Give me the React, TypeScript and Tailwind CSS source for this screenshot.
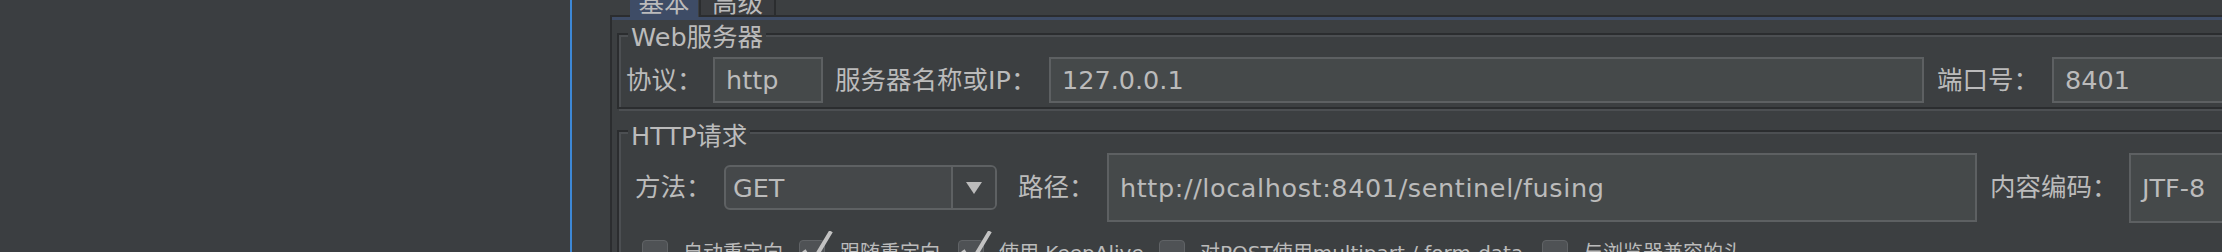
import React from 'react';

const field =
  'shrink-0 border-2 border-[#5d6062] bg-[#45494a] pl-[11px] flex items-center whitespace-nowrap leading-[30px]';

// etched border like Swing's TitledBorder: dark line, light line 2px lower/right
const groupBox =
  'border-2 border-[#2b2d2f] shadow-[inset_2px_2px_0_#4c4f52,2px_2px_0_#4c4f52]';

function GroupTitle({ text, lift }: { text: string; lift: string }) {
  return (
    <div className={`${lift} ml-[9px] w-fit px-[3px] bg-[#3c3f41] leading-[30px] whitespace-nowrap`}>
      {text}
    </div>
  );
}

function CheckBox({ checked }: { checked?: boolean }) {
  return (
    <div className="relative w-[26px] h-[26px] shrink-0 rounded-[4px] bg-[#4f5255] border border-[#606366]">
      {checked && (
        <svg
          className="absolute left-[1px] -top-[10px]"
          width="32"
          height="36"
          viewBox="0 0 32 36"
          fill="none"
        >
          <path d="M4 21 L11 32 L29 2" stroke="#c2c2c2" strokeWidth="4" strokeLinecap="square" />
        </svg>
      )}
    </div>
  );
}

type Opt = { label: string; checked: boolean; width: string };

const options: Opt[] = [
  { label: '自动重定向', checked: false, width: 'w-[157px]' },
  { label: '跟随重定向', checked: true, width: 'w-[159px]' },
  { label: '使用 KeepAlive', checked: true, width: 'w-[201px]' },
  { label: '对POST使用multipart / form-data', checked: false, width: 'w-[383px]' },
  { label: '与浏览器兼容的头', checked: false, width: 'w-[300px]' },
];

export default function App() {
  return (
    <div className="w-[2222px] h-[252px] overflow-hidden flex bg-[#3c3f41] text-[#bbbbbb] text-[25.5px] font-['DejaVu_Sans','Noto_Sans_CJK_SC',sans-serif]">
      {/* left tree panel */}
      <div className="w-[572px] h-full shrink-0 bg-[#3b3e41] border-r-2 border-[#3d88d6]" />

      <div className="ml-[38px] w-[1800px] shrink-0 flex flex-col">
        {/* tabs */}
        <div className="h-[17px] flex shrink-0">
          <div className="w-[20px] mt-[15px] border-b-2 border-l-2 border-[#2b2d2f]" />
          <div className="w-[68px] h-[17px] overflow-hidden bg-[#3e4c66] flex justify-center">
            <div className="-mt-[9px] leading-[25px] whitespace-nowrap">基本</div>
          </div>
          <div className="w-[77px] h-[17px] overflow-hidden ml-[1px] border-x-2 border-b-2 border-[#2b2d2f] bg-[#3b3d40] flex justify-center">
            <div className="-mt-[9px] leading-[25px] whitespace-nowrap">高级</div>
          </div>
          <div className="flex-1 border-b-2 border-[#2b2d2f]" />
        </div>

        {/* tab content */}
        <div className="flex-1 flex flex-col border-l-2 border-[#2b2d2f]">
          <div className="h-[3px] bg-[#3e4c66] shrink-0" />

          <div className={`mt-[13px] ml-[5px] pb-[4px] ${groupBox}`}>
            <GroupTitle text="Web服务器" lift="-mt-[13px]" />
            <div className="mt-[5px] h-[46px] flex items-center pl-[7px]">
              <span className="w-[87px] shrink-0 whitespace-nowrap">协议：</span>
              <div className={`${field} w-[110px] h-[46px]`}>http</div>
              <span className="ml-[12px] w-[214px] shrink-0 whitespace-nowrap">服务器名称或IP：</span>
              <div className={`${field} w-[875px] h-[46px]`}>127.0.0.1</div>
              <span className="ml-[13px] w-[115px] shrink-0 whitespace-nowrap">端口号：</span>
              <div className={`${field} w-[300px] h-[46px]`}>8401</div>
            </div>
          </div>

          <div className={`mt-[21px] ml-[5px] h-[200px] ${groupBox}`}>
            <GroupTitle text="HTTP请求" lift="-mt-[11px]" />
            <div className="mt-[2px] h-[69px] flex items-center pl-[16px]">
              <span className="w-[89px] shrink-0 whitespace-nowrap">方法：</span>
              <div className="w-[273px] h-[45px] shrink-0 flex rounded-[6px] border-2 border-[#5e6163] bg-[#45484a] overflow-hidden">
                <div className="flex-1 flex items-center pl-[7px] leading-[30px]">GET</div>
                <div className="w-[44px] flex items-center justify-center border-l-2 border-[#5e6163] bg-[#3f4244]">
                  <svg width="16" height="12" viewBox="0 0 16 12">
                    <polygon points="0,0 16,0 8,12" fill="#bbbbbb" />
                  </svg>
                </div>
              </div>
              <span className="ml-[21px] w-[89px] shrink-0 whitespace-nowrap">路径：</span>
              <div className={`${field} w-[870px] h-[69px] tracking-[0.6px]`}>http://localhost:8401/sentinel/fusing</div>
              <span className="ml-[13px] w-[139px] shrink-0 whitespace-nowrap">内容编码：</span>
              <div className={`${field} w-[300px] h-[70px]`}>JTF-8</div>
            </div>

            <div className="mt-[18px] flex pl-[23px]">
              {options.map((o) => (
                <div key={o.label} className={`${o.width} shrink-0 flex items-center gap-[15px]`}>
                  <CheckBox checked={o.checked} />
                  <span className="text-[20px] leading-[26px] whitespace-nowrap">{o.label}</span>
                </div>
              ))}
            </div>
          </div>
        </div>
      </div>
    </div>
  );
}
